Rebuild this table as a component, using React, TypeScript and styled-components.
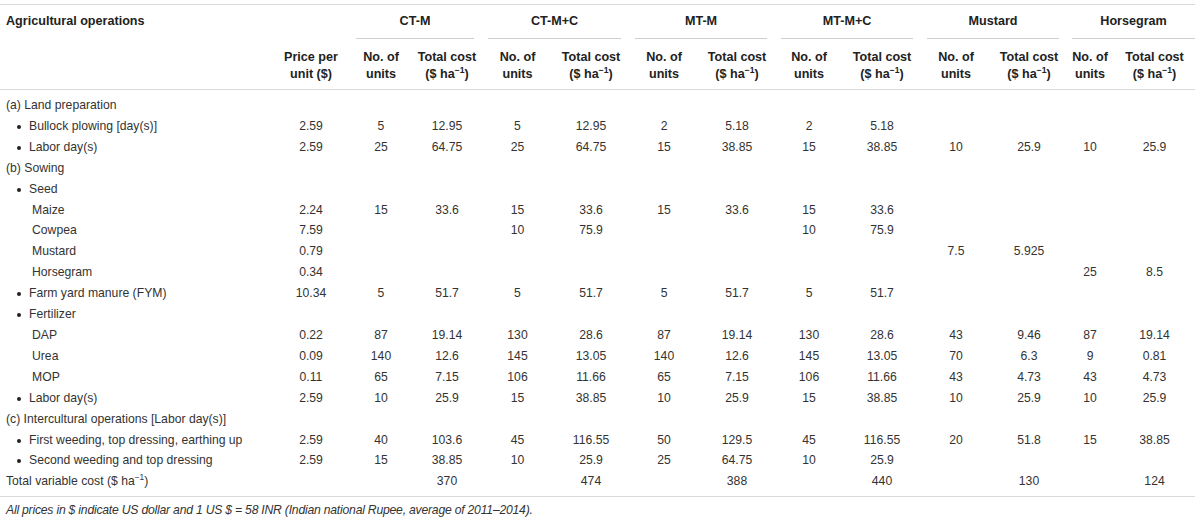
import React from "react";
import styled, { createGlobalStyle } from "styled-components";

const GlobalStyle = createGlobalStyle`
  html, body { margin: 0; padding: 0; background: #ffffff; }
  body { font-family: "Liberation Sans", Arial, sans-serif; color: #333; }
`;

const Page = styled.div`
  width: 1200px;
  padding-top: 4px;
  box-sizing: border-box;
`;

const Table = styled.table`
  width: 1195px;
  table-layout: fixed;
  border-collapse: separate;
  border-spacing: 0;
  border-top: 1px solid #d9d9d9;
  font-size: 12.2px;
`;

const HeadCell = styled.th<{ $align?: "left" | "center"; $row: 1 | 2 }>`
  padding: ${(p) => (p.$row === 2 ? "3px 0 0 0" : "0")};
  font-weight: 700;
  font-size: 12.6px;
  color: #222;
  text-align: ${(p) => p.$align ?? "center"};
  vertical-align: ${(p) => (p.$row === 1 ? "bottom" : "middle")};
  height: ${(p) => (p.$row === 1 ? "34px" : "47px")};
  line-height: 17px;
  white-space: nowrap;
  ${(p) => (p.$row === 2 ? "border-bottom: 1px solid #d9d9d9;" : "")}
`;

const GroupTitle = styled.div<{ $lined?: boolean; $inset?: string; $indent?: number }>`
  line-height: 15px;
  padding-bottom: 9px;
  padding-left: ${(p) => p.$indent ?? 0}px;
  margin: ${(p) => p.$inset ?? "0"};
  border-bottom: 1px solid ${(p) => (p.$lined ? "#cfcfcf" : "transparent")};
`;

const LabelCell = styled.td<{ $level: 0 | 1 | 2 }>`
  padding: 0 0 0 ${(p) => (p.$level === 0 ? 6 : p.$level === 1 ? 17 : 32)}px;
  line-height: 20.9px;
  white-space: nowrap;
  text-align: left;
`;

const NumCell = styled.td`
  padding: 0 2px;
  line-height: 20.9px;
  text-align: center;
  white-space: nowrap;
`;

const BodyRow = styled.tr<{ $first?: boolean; $last?: boolean }>`
  & > td {
    ${(p) => (p.$first ? "padding-top: 5px;" : "")}
    ${(p) => (p.$last ? "padding-bottom: 4px; border-bottom: 1px solid #d9d9d9;" : "")}
  }
`;

const Bullet = styled.span`
  display: inline-block;
  width: 4px;
  height: 4px;
  border-radius: 50%;
  background: #222;
  margin-right: 8px;
  vertical-align: 1px;
`;

const Sup = styled.sup`
  font-size: 0.68em;
  line-height: 0;
  vertical-align: 0.55em;
`;

const Footnote = styled.p`
  margin: 6px 0 0 0;
  padding-left: 6px;
  font-style: italic;
  font-size: 12.2px;
  letter-spacing: -0.22px;
  line-height: 15px;
  color: #333;
`;

const HaUnit = () => (
  <>
    ($ ha<Sup>−1</Sup>)
  </>
);

type Level = 0 | 1 | 2;
type Row = { label: React.ReactNode; level: Level; price?: string; vals?: string[] };

const rows: Row[] = [
  { label: "(a) Land preparation", level: 0 },
  { label: "Bullock plowing [day(s)]", level: 1, price: "2.59", vals: ["5", "12.95", "5", "12.95", "2", "5.18", "2", "5.18"] },
  { label: "Labor day(s)", level: 1, price: "2.59", vals: ["25", "64.75", "25", "64.75", "15", "38.85", "15", "38.85", "10", "25.9", "10", "25.9"] },
  { label: "(b) Sowing", level: 0 },
  { label: "Seed", level: 1 },
  { label: "Maize", level: 2, price: "2.24", vals: ["15", "33.6", "15", "33.6", "15", "33.6", "15", "33.6"] },
  { label: "Cowpea", level: 2, price: "7.59", vals: ["", "", "10", "75.9", "", "", "10", "75.9"] },
  { label: "Mustard", level: 2, price: "0.79", vals: ["", "", "", "", "", "", "", "", "7.5", "5.925"] },
  { label: "Horsegram", level: 2, price: "0.34", vals: ["", "", "", "", "", "", "", "", "", "", "25", "8.5"] },
  { label: "Farm yard manure (FYM)", level: 1, price: "10.34", vals: ["5", "51.7", "5", "51.7", "5", "51.7", "5", "51.7"] },
  { label: "Fertilizer", level: 1 },
  { label: "DAP", level: 2, price: "0.22", vals: ["87", "19.14", "130", "28.6", "87", "19.14", "130", "28.6", "43", "9.46", "87", "19.14"] },
  { label: "Urea", level: 2, price: "0.09", vals: ["140", "12.6", "145", "13.05", "140", "12.6", "145", "13.05", "70", "6.3", "9", "0.81"] },
  { label: "MOP", level: 2, price: "0.11", vals: ["65", "7.15", "106", "11.66", "65", "7.15", "106", "11.66", "43", "4.73", "43", "4.73"] },
  { label: "Labor day(s)", level: 1, price: "2.59", vals: ["10", "25.9", "15", "38.85", "10", "25.9", "15", "38.85", "10", "25.9", "10", "25.9"] },
  { label: "(c) Intercultural operations [Labor day(s)]", level: 0 },
  { label: "First weeding, top dressing, earthing up", level: 1, price: "2.59", vals: ["40", "103.6", "45", "116.55", "50", "129.5", "45", "116.55", "20", "51.8", "15", "38.85"] },
  { label: "Second weeding and top dressing", level: 1, price: "2.59", vals: ["15", "38.85", "10", "25.9", "25", "64.75", "10", "25.9"] },
  { label: <>Total variable cost <HaUnit /></>, level: 0, vals: ["", "370", "", "474", "", "388", "", "440", "", "130", "", "124"] },
];

const groups = ["CT-M", "CT-M+C", "MT-M", "MT-M+C", "Mustard", "Horsegram"];
const colWidths = [273, 76, 64, 68, 73, 74, 72, 74, 70, 76, 72, 74, 48, 81];

export default function App() {
  return (
    <Page>
      <GlobalStyle />
      <Table>
        <colgroup>
          {colWidths.map((w, i) => (
            <col key={i} style={{ width: w }} />
          ))}
        </colgroup>
        <thead>
          <tr>
            <HeadCell $row={1} $align="left">
              <GroupTitle $indent={6}>Agricultural operations</GroupTitle>
            </HeadCell>
            <HeadCell $row={1} />
            {groups.map((g, i) => (
              <HeadCell key={g} $row={1} colSpan={2}>
                <GroupTitle $lined $inset={i === groups.length - 1 ? "0 0 0 6px" : "0 7px"}>
                  {g}
                </GroupTitle>
              </HeadCell>
            ))}
          </tr>
          <tr>
            <HeadCell $row={2} />
            <HeadCell $row={2}>
              Price per
              <br />
              unit ($)
            </HeadCell>
            {groups.map((g) => (
              <React.Fragment key={g}>
                <HeadCell $row={2}>
                  No. of
                  <br />
                  units
                </HeadCell>
                <HeadCell $row={2}>
                  Total cost
                  <br />
                  <HaUnit />
                </HeadCell>
              </React.Fragment>
            ))}
          </tr>
        </thead>
        <tbody>
          {rows.map((r, i) => (
            <BodyRow key={i} $first={i === 0} $last={i === rows.length - 1}>
              <LabelCell $level={r.level}>
                {r.level === 1 && <Bullet />}
                {r.label}
              </LabelCell>
              <NumCell>{r.price ?? ""}</NumCell>
              {Array.from({ length: 12 }).map((_, j) => (
                <NumCell key={j}>{r.vals?.[j] ?? ""}</NumCell>
              ))}
            </BodyRow>
          ))}
        </tbody>
      </Table>
      <Footnote>
        All prices in $ indicate US dollar and 1 US $ = 58 INR (Indian national Rupee, average of 2011–2014).
      </Footnote>
    </Page>
  );
}
